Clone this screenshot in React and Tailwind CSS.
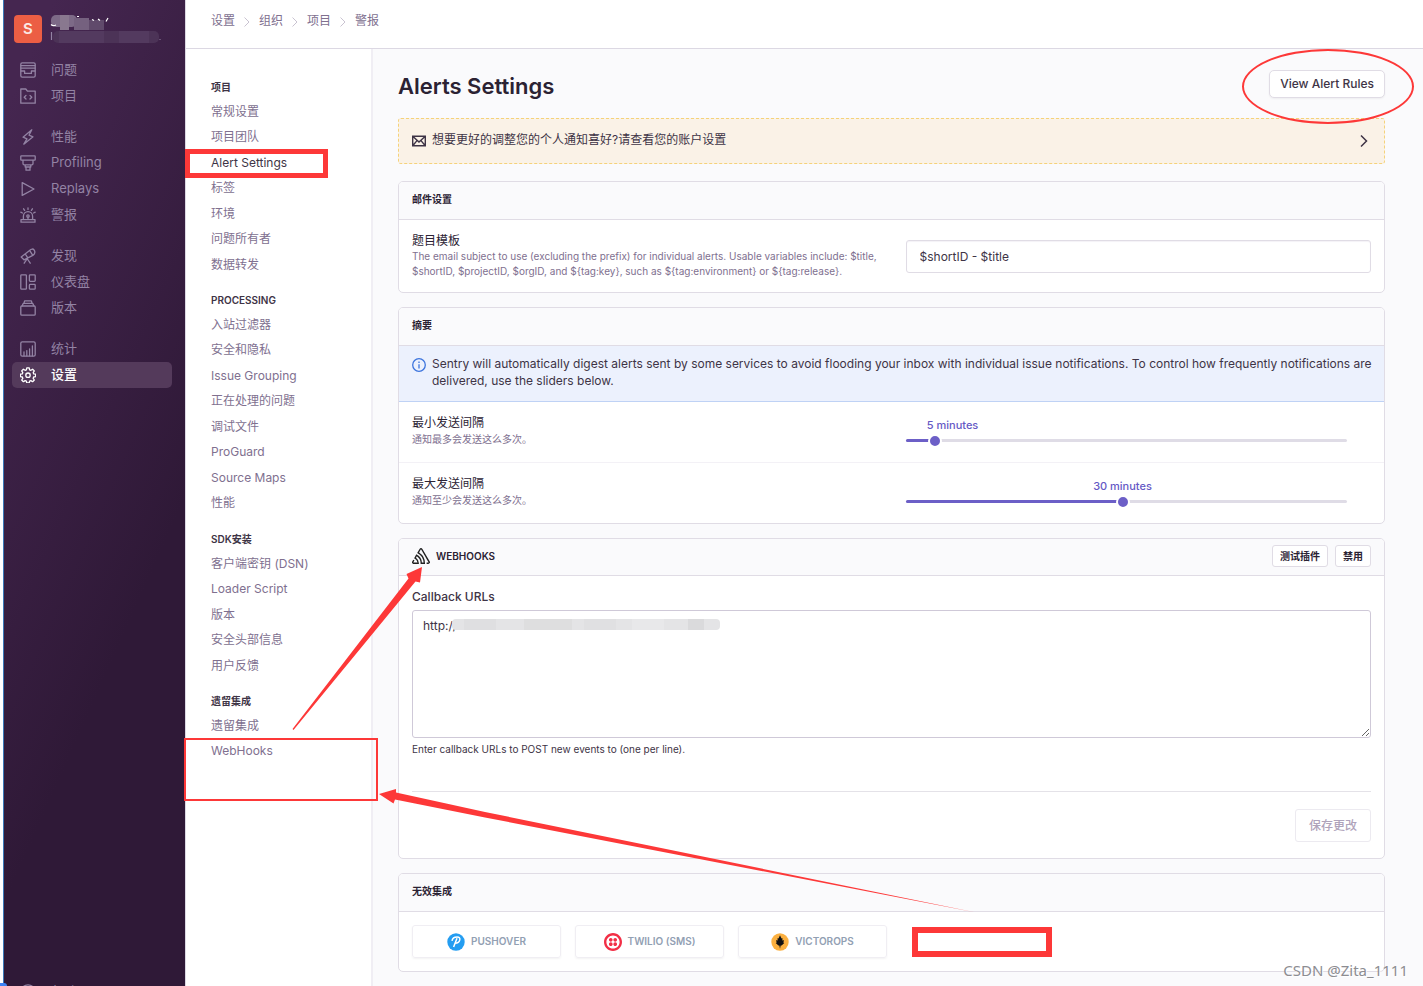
import React, { useState } from "react";
import { SiSentry, SiTwilio } from "react-icons/si";

const Icon = ({ children, className = "w-4 h-4" }) => (
  <svg
    viewBox="0 0 16 16"
    className={`${className} shrink-0`}
    fill="none"
    stroke="currentColor"
    strokeWidth="1.3"
    strokeLinecap="round"
    strokeLinejoin="round"
    aria-hidden="true"
  >
    {children}
  </svg>
);

const icons = {
  issues: (
    <>
      <rect x="0.8" y="0.8" width="14.4" height="14.4" rx="1.4" />
      <path d="M1 3.6h14M1 6.2h14M1 9h3.6v2.4h6.8V9H15" />
    </>
  ),
  projects: (
    <>
      <path d="M.8 15.2V1h5l1.6 2.2h7.8v12z" />
      <path d="M6 7.4 4.2 9.2 6 11M10 7.4l1.8 1.8L10 11" />
    </>
  ),
  performance: <path d="M11.8.8 3 8.2l4 1.6-3.2 5.4 9.2-7.4-4-1.6z" />,
  profiling: (
    <>
      <rect x="0.8" y="0.8" width="14.4" height="4.4" rx="0.6" />
      <path d="M3 5.4v3.2c0 .8.4 1.2 1.2 1.2h7.6c.8 0 1.2-.4 1.2-1.2V5.4M5.2 10v2h5.6v-2M6 12.2v3h4v-3" />
    </>
  ),
  replays: <path d="M2.2 1.6v12.8L14 8z" />,
  alerts: (
    <>
      <path d="M1 15.2h14v-2.6H1zM3.4 12.4V9.2a4.6 4.6 0 0 1 9.2 0v3.2M8 .8v1.6M3.6 1.8l1 1.6M12.4 1.8l-1 1.6M.8 5.2l1.6.8M15.2 5.2l-1.6.8" />
      <circle cx="8" cy="9" r="1.2" />
      <path d="M8 10.2v2" />
    </>
  ),
  discover: (
    <>
      <path d="m1.2 9 8.4-6.6 3.2 5L4 11.800zM9.600 2.400c1.600-1.800 3.600-1.800 4.600-.2 1 1.600.600 3.800-1.400 5.200M5.200 5.900l2.600 4M7 11l-2.800 4.200M7.400 11l2.800 4.200" />
    </>
  ),
  dashboards: (
    <>
      <rect x="0.8" y="0.8" width="5.6" height="14.4" rx="0.8" />
      <rect x="9.4" y="0.8" width="5.8" height="6.6" rx="0.8" />
      <rect x="9.4" y="10.4" width="5.8" height="4.8" rx="0.8" />
    </>
  ),
  releases: (
    <>
      <rect x="0.8" y="6" width="14.4" height="9.2" rx="1" />
      <path d="M2.2 5.8 3.2 3.4h9.6l1 2.4M4 3.2 4.6.8h6.8l.6 2.4" />
    </>
  ),
  stats: (
    <>
      <rect x="0.8" y="0.8" width="14.4" height="14.4" rx="1.4" />
      <path d="M4 14.8v-4M6.8 14.8V9.6M9.6 14.8V7.8M12.4 14.8V4.8" />
    </>
  ),
  settings: (
    <>
      <path d="M6.8.8h2.4l.4 2 1.3.5 1.7-1.1 1.7 1.7-1.1 1.7.5 1.3 1.9.3v2.4l-1.9.4-.5 1.3 1.1 1.7-1.7 1.7-1.7-1.1-1.3.5-.4 1.9H6.8l-.4-1.9-1.3-.5-1.7 1.1-1.7-1.7 1.1-1.7-.5-1.3-1.9-.4V7.2l1.9-.3.5-1.3-1.1-1.7 1.7-1.7 1.7 1.1 1.3-.5z" />
      <circle cx="8" cy="8.2" r="2.2" />
    </>
  ),
  help: (
    <>
      <circle cx="8" cy="8" r="7.2" />
      <path d="M6 6.2a2 2 0 1 1 2 2.4v1" />
    </>
  ),
};

const sidebarGroups = [
  [
    { label: "问题", icon: "issues" },
    { label: "项目", icon: "projects" },
  ],
  [
    { label: "性能", icon: "performance" },
    { label: "Profiling", icon: "profiling" },
    { label: "Replays", icon: "replays" },
    { label: "警报", icon: "alerts" },
  ],
  [
    { label: "发现", icon: "discover" },
    { label: "仪表盘", icon: "dashboards" },
    { label: "版本", icon: "releases" },
  ],
  [
    { label: "统计", icon: "stats" },
    { label: "设置", icon: "settings", active: true },
  ],
];

const settingsNav = [
  {
    title: "项目",
    items: ["常规设置", "项目团队", "Alert Settings", "标签", "环境", "问题所有者", "数据转发"],
  },
  {
    title: "PROCESSING",
    items: ["入站过滤器", "安全和隐私", "Issue Grouping", "正在处理的问题", "调试文件", "ProGuard", "Source Maps", "性能"],
  },
  {
    title: "SDK安装",
    items: ["客户端密钥 (DSN)", "Loader Script", "版本", "安全头部信息", "用户反馈"],
  },
  {
    title: "遗留集成",
    items: ["遗留集成", "WebHooks"],
  },
];

const subjectHelp =
  "The email subject to use (excluding the prefix) for individual alerts. Usable variables include: $title, $shortID, $projectID, $orgID, and ${tag:key}, such as ${tag:environment} or ${tag:release}.";

const SidebarLink = ({ label, icon, active }) => (
  <a
    href="#"
    className={`flex h-[26px] items-center gap-[15px] rounded-[5px] px-2 text-[13px] ${
      active ? "bg-[#543a5b] font-medium text-white" : "text-[#9383a4]"
    }`}
  >
    <Icon>{icons[icon]}</Icon>
    {label}
  </a>
);

const Sidebar = () => (
  <aside className="flex w-[182px] shrink-0 flex-col overflow-hidden border-l border-[#3a78b8] bg-[linear-gradient(294deg,#2f1937_35%,#452650_92%)] px-2 pt-[15px]">
    <div className="mb-[14px] flex h-7 items-center gap-2 px-0.5">
      <div className="flex h-7 w-7 shrink-0 items-center justify-center rounded bg-[#ec5e44] text-[15px] font-semibold text-[#fbe9e4]">
        S
      </div>
      <svg viewBox="0 0 114 28" className="h-7 w-[114px]" aria-hidden="true">
        <rect x="1" y="0" width="26" height="12" rx="5" fill="#7d6a87" />
        <rect x="10" y="0" width="9" height="15" fill="#89788f" />
        <rect x="24" y="3" width="15" height="12" fill="#75617f" />
        <rect x="39" y="5" width="15" height="10" fill="#604a6b" />
        <path d="M1 9.5q2 2 5 .5M27 1.5h2M42 4.500l2 1M48 4l2 1.500M58 3l-2 3.500" stroke="#fff" strokeWidth="1.2" fill="none" />
        <rect x="3" y="16" width="106" height="12" rx="5" fill="#4c3357" />
        <rect x="9" y="16" width="45" height="12" fill="#533a5f" />
        <rect x="69" y="16" width="30" height="12" fill="#533a5f" />
        <path d="M1.5 17v8M109.5 24.5h1" stroke="#9383a4" strokeWidth="1.2" />
      </svg>
    </div>
    <nav className="flex flex-col gap-[15px]">
      {sidebarGroups.map((group, i) => (
        <div key={i} className="w-[160px]">
          {group.map((item) => (
            <SidebarLink key={item.label} {...item} />
          ))}
        </div>
      ))}
    </nav>
    <div className="mt-auto h-[7px]">
      <SidebarLink label="帮助" icon="help" />
    </div>
  </aside>
);

const Breadcrumbs = () => (
  <header className="flex h-[49px] shrink-0 items-start gap-2 border-b border-[#dcd8e3] bg-white px-[25px] pt-[11px] text-xs leading-5 text-[#80708f]">
    {["设置", "组织", "项目", "警报"].map((crumb, i) => (
      <React.Fragment key={crumb}>
        {i > 0 && (
          <svg viewBox="0 0 8 20" className="h-5 w-2 text-[#c9c3d1]" fill="none" stroke="currentColor" aria-hidden="true">
            <path d="M1.5 6.500 6 11l-4.500 4.500" />
          </svg>
        )}
        <a href="#">{crumb}</a>
      </React.Fragment>
    ))}
  </header>
);

const SettingsNav = () => (
  <nav className="flex w-[187px] shrink-0 flex-col gap-[15px] border-r-2 border-[#f0eef4] bg-white pt-[30px] pl-[25px]">
    {settingsNav.map((group) => (
      <div key={group.title}>
        <h6 className="mb-1 text-[10px] leading-4 font-semibold text-[#3e3446]">{group.title}</h6>
        <ul className="text-xs text-[#80708f]">
          {group.items.map((item) => (
            <li key={item} className="flex items-center odd:h-[25px] even:h-[26px]">
              <a href="#" className={item === "Alert Settings" ? "text-[#3e3446]" : ""}>
                {item}
              </a>
            </li>
          ))}
        </ul>
      </div>
    ))}
  </nav>
);

const Panel = ({ children }) => (
  <section className="mb-[14px] overflow-hidden rounded-[5px] border border-[#e0dce5] bg-white">{children}</section>
);

const PanelHeader = ({ children, className = "h-[38px]" }) => (
  <div
    className={`${className} flex items-center border-b border-[#e0dce5] bg-[#fafafc] px-[13px] pb-0.5 text-[10px] font-semibold text-[#2b2233]`}
  >
    {children}
  </div>
);

const SliderRow = ({ id, label, help, initial }) => {
  const [value, setValue] = useState(initial);
  const percent = ((value - 1) / 59) * 100;
  return (
    <div className="grid grid-cols-2 gap-7 border-t border-[#f3f1f6] px-[13px] pt-[13px] pb-[15px] first:border-t-0">
      <div>
        <label htmlFor={id} className="block text-xs leading-4 text-[#2b2233]">
          {label}
        </label>
        <p className="text-[10px] leading-4 text-[#80708f]">{help}</p>
      </div>
      <div className="mr-6">
        <div className="relative h-5">
          <output
            htmlFor={id}
            className="absolute -translate-x-1/2 text-[11px] leading-5 font-medium whitespace-nowrap text-[#6559c5]"
            style={{ left: `max(${percent}%, 47px)` }}
          >
            {`${value} minutes`}
          </output>
        </div>
        <div className="relative mt-1 h-[3px] rounded-full bg-[#dfdce6]">
          <div className="h-[3px] rounded-full bg-[#6c5fc7]" style={{ width: `${percent}%` }} />
          <input
            id={id}
            type="range"
            min="1"
            max="60"
            value={value}
            onChange={(e) => setValue(Number(e.target.value))}
            className="absolute inset-y-0 -left-[7px] w-[calc(100%+14px)] appearance-none bg-transparent [&::-webkit-slider-thumb]:h-[14px] [&::-webkit-slider-thumb]:w-[14px] [&::-webkit-slider-thumb]:appearance-none [&::-webkit-slider-thumb]:rounded-full [&::-webkit-slider-thumb]:border-2 [&::-webkit-slider-thumb]:border-white [&::-webkit-slider-thumb]:bg-[#6c5fc7]"
          />
        </div>
      </div>
    </div>
  );
};

const PushoverLogo = () => (
  <svg viewBox="0 0 18 18" className="h-[18px] w-[18px]" aria-hidden="true">
    <circle cx="9" cy="9" r="8.7" fill="#249df1" />
    <path
      d="M5 7.800C5.400 5.400 7.800 4 10.200 4c2 0 3 1.200 2.600 2.900-.5 2-2.500 3.300-4.600 3.300M10 5.200 6.600 14"
      fill="none"
      stroke="#fff"
      strokeWidth="1.5"
    />
  </svg>
);

const VictorOpsLogo = () => (
  <svg viewBox="0 0 18 18" className="h-[18px] w-[18px]" aria-hidden="true">
    <circle cx="9" cy="9" r="8.7" fill="#fbb040" />
    <path
      d="M9 2.200l1.500 3.400.9-.6v2.600l1.700-.4-.8 2.200 1 .6-2.700 2.400-.9.200L9 15.800l-.7-3.200-.9-.2L4.700 10l1-.6-.8-2.200 1.700.4V5l.9.6z"
      fill="#111"
    />
  </svg>
);

const integrations = [
  { name: "PUSHOVER", logo: <PushoverLogo /> },
  { name: "TWILIO (SMS)", logo: <SiTwilio size={18} color="#f22f46" /> },
  { name: "VICTOROPS", logo: <VictorOpsLogo /> },
];

const Content = () => (
  <main className="min-w-0 flex-1 bg-[#fafafc] pt-[21px] pr-[38px] pl-[25px] text-[#3e3446]">
    <div className="mb-5 flex h-7 items-center justify-between">
      <h1 className="pt-1 text-[22px] leading-7 font-semibold text-[#2b2233]">Alerts Settings</h1>
      <button className="h-7 rounded-[5px] border border-[#e0dce5] bg-white px-[10px] text-xs font-medium shadow-xs">
        View Alert Rules
      </button>
    </div>

    <a
      href="#"
      className="mb-[17px] flex h-[46px] items-center gap-[6px] rounded-[3px] border border-dashed border-[#f5d27a] bg-[#faf2e7] px-[13px] text-xs"
    >
      <svg viewBox="0 0 14 12" className="h-3 w-[14px] shrink-0" fill="none" stroke="currentColor" strokeWidth="1.4" aria-hidden="true">
        <path d="M.7 1.200h12.600v9.600H.7zM.7 1.200 7 7l6.300-5.800M.7 10.800 5 5.600M13.300 10.800 9 5.600" />
      </svg>
      <span className="flex-1 pb-0.5">想要更好的调整您的个人通知喜好?请查看您的账户设置</span>
      <svg viewBox="0 0 14 14" className="h-[14px] w-[14px]" fill="none" stroke="currentColor" strokeWidth="1.5" aria-hidden="true">
        <path d="M4 1.500 9.500 7 4 12.500" />
      </svg>
    </a>

    <Panel>
      <PanelHeader>邮件设置</PanelHeader>
      <div className="grid grid-cols-2 items-center gap-7 px-[13px] py-[13px]">
        <div>
          <label htmlFor="subject" className="block text-xs leading-4 text-[#2b2233]">
            题目模板
          </label>
          <p className="text-[10px] leading-[15px] text-[#80708f]">{subjectHelp}</p>
        </div>
        <input
          id="subject"
          type="text"
          defaultValue="$shortID - $title"
          className="h-[33px] w-full rounded-[3px] border border-[#e0dce5] bg-white px-[13px] text-xs shadow-[inset_0_1px_1px_#f4f2f7]"
        />
      </div>
    </Panel>

    <Panel>
      <PanelHeader>摘要</PanelHeader>
      <div className="flex gap-[6px] border-b border-[#bfd2f5] bg-[#ecf1fd] pt-[9px] pr-2 pb-3 pl-[13px] text-xs leading-[17px]">
        <svg viewBox="0 0 14 14" className="mt-[3px] h-[14px] w-[14px] shrink-0 text-[#3c74dd]" fill="none" stroke="currentColor" strokeWidth="1.3" aria-hidden="true">
          <circle cx="7" cy="7" r="6.3" />
          <path d="M7 6.200V10.400M7 3.600V5" />
        </svg>
        <p>
          Sentry will automatically digest alerts sent by some services to avoid flooding your inbox with individual
          issue notifications. To control how frequently notifications are delivered, use the sliders below.
        </p>
      </div>
      <div>
        <SliderRow id="min-delay" label="最小发送间隔" help="通知最多会发送这么多次。" initial={5} />
        <SliderRow id="max-delay" label="最大发送间隔" help="通知至少会发送这么多次。" initial={30} />
      </div>
    </Panel>

    <Panel>
      <PanelHeader className="h-[37px]">
        <SiSentry size={18} className="mr-[6px] text-[#222]" />
        <span className="flex-1">WEBHOOKS</span>
        <button className="mr-[7px] h-[22px] rounded-[3px] border border-[#e0dce5] bg-white px-[7px]">测试插件</button>
        <button className="h-[22px] rounded-[3px] border border-[#e0dce5] bg-white px-[7px]">禁用</button>
      </PanelHeader>
      <div className="px-[13px] pt-3 pb-4">
        <label htmlFor="callback" className="block text-xs leading-[17px] font-medium">
          Callback URLs
        </label>
        <div className="relative mt-[5px]">
          <textarea
            id="callback"
            defaultValue="http://"
            className="block h-32 w-full rounded-[3px] border border-[#cfc9d8] bg-white px-[10px] py-[6px] text-xs leading-[17px]"
          />
          <div className="absolute top-[9px] left-10 flex h-[11px] w-[268px] overflow-hidden rounded-[4px] bg-[#e4e4e6]">
            <span className="ml-3 w-8 bg-[#dfdfe1]" />
            <span className="ml-7 w-12 bg-[#dededf]" />
            <span className="ml-3 w-8 bg-[#e0e0e2]" />
            <span className="ml-4 w-8 bg-[#e8e8ea]" />
            <span className="ml-6 w-4 bg-[#dadadc]" />
          </div>
        </div>
        <p className="mt-[3px] text-[10px] leading-4">Enter callback URLs to POST new events to (one per line).</p>
        <div className="mt-[34px] flex justify-end border-t border-[#e4e2e8] pt-[17px]">
          <button disabled className="h-[33px] rounded-[3px] border border-[#eceaf0] bg-white px-[13px] text-xs font-medium text-[#afa3bb]">
            保存更改
          </button>
        </div>
      </div>
    </Panel>

    <Panel>
      <PanelHeader>无效集成</PanelHeader>
      <div className="flex gap-[14px] px-[13px] py-[13px]">
        {integrations.map(({ name, logo }) => (
          <button
            key={name}
            className="flex h-[33px] w-[149px] items-center justify-center gap-[6px] rounded-[3px] border border-[#f0eef3] text-[10px] font-semibold text-[#92a0b3] shadow-xs"
          >
            {logo}
            {name}
          </button>
        ))}
      </div>
    </Panel>
  </main>
);

// red marker boxes and arrows drawn over the page
const Annotations = () => (
  <div className="pointer-events-none absolute inset-0">
    <div className="absolute top-[149px] left-[185px] h-[29px] w-[143px] border-[5px] border-[#fd3838]" />
    <div className="absolute top-[738px] left-[184px] h-[63px] w-[194px] border-2 border-[#fd3838]" />
    <div className="absolute top-[927px] left-[912px] h-[30px] w-[140px] border-[6px] border-[#fd3838]" />
    <div className="absolute top-[49px] right-[9px] h-[75px] w-[172px] rounded-[50%] border-2 border-[#fd3838]" />
    <svg width="1000" height="930" className="absolute top-0 left-0" fill="#fd3838" aria-hidden="true">
      <path d="M292.500 729 408.500 578.500 406.500 574 422 567 420 582.500 415.500 581.500 293.500 730z" />
      <path d="M379 794 396 789 396 792.500 485 812 976 912.500 485 817.500 395 799.500 393.500 803.500z" />
    </svg>
    <div className="absolute bottom-0 left-0 h-[3px] w-[7px] rounded-tr bg-[#3b82f6]" />
    <p className="absolute right-[15px] bottom-[6px] font-['Noto_Sans'] text-[15px] leading-5 text-[#8d8d92] [text-shadow:1px_1px_0_#fff]">
      CSDN @Zita_1111
    </p>
  </div>
);

export default function App() {
  return (
    <div className="relative flex h-screen overflow-hidden bg-white pl-[3px] font-['Inter','Noto_Sans_CJK_SC',sans-serif]">
      <Sidebar />
      <div className="flex min-w-0 flex-1 flex-col border-l border-[#dcd8e3]">
        <Breadcrumbs />
        <div className="flex min-h-0 flex-1">
          <SettingsNav />
          <Content />
        </div>
      </div>
      <Annotations />
    </div>
  );
}
